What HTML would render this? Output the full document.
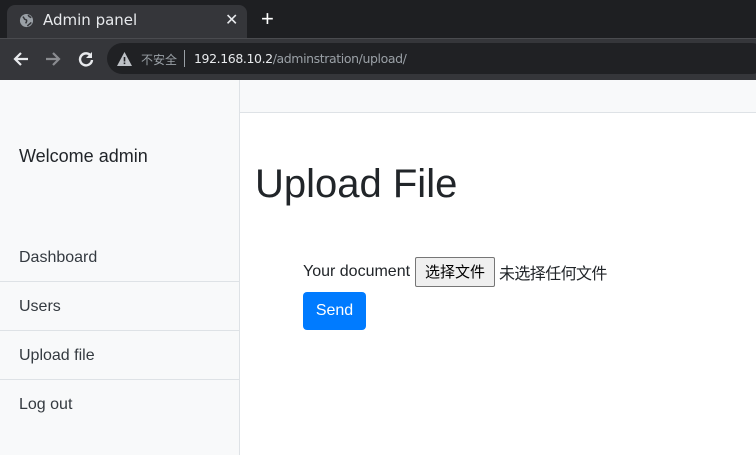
<!DOCTYPE html>
<html><head><meta charset="utf-8"><style>
*{margin:0;padding:0;box-sizing:border-box}
body{width:756px;height:455px;overflow:hidden;background:#fff;font-family:"Liberation Sans","Noto Sans CJK SC",sans-serif;position:relative}
.abs{position:absolute}
#tabbar{left:0;top:0;width:756px;height:38px;background:#1e1f22}
#tab{left:7px;top:5px;width:240px;height:34px;background:#35363a;border-radius:8px 8px 0 0}
#toolbar{left:0;top:38px;width:756px;height:42px;background:#35363a}
#omni{left:107px;top:43px;width:660px;height:31px;background:#202124;border-radius:16px}
.side{left:0;top:80px;width:240px;height:375px;background:#f8f9fa;border-right:1px solid #dee2e6}
.nav{left:0;width:239px;height:49px;border-bottom:1px solid #dee2e6;color:#343a40;font-size:16px;padding:16px 19px 0}
</style></head><body>
<div id="tabbar" class="abs"></div>
<div id="tab" class="abs"></div>
<svg class="abs" style="left:19px;top:13px" width="15" height="15" viewBox="0 0 16 16"><circle cx="8" cy="8" r="7" fill="#9aa0a6"/><path d="M4 4c2 1 1 3 3 3s1 3 0 4M10 2c0 2 2 2 3 3M9 14c1-2 3-2 4-4" stroke="#35363a" stroke-width="1.6" fill="none"/></svg>
<div class="abs" style="left:43px;top:11px;color:#e8eaed;font-size:15px;font-family:'DejaVu Sans',sans-serif">Admin panel</div>
<div class="abs" style="left:225px;top:10px;color:#e8eaed;font-size:16px">✕</div>
<div class="abs" style="left:261px;top:6px;color:#fff;font-size:22px">+</div>
<div id="toolbar" class="abs"></div>
<div class="abs" style="left:0;top:38px;width:756px;height:1px;background:#4a4b4f"></div>
<div id="omni" class="abs"></div>
<svg class="abs" style="left:12px;top:50px" width="18" height="18" viewBox="0 0 18 18"><path d="M16 9H3M9 3L3 9l6 6" stroke="#e8eaed" stroke-width="2.2" fill="none"/></svg>
<svg class="abs" style="left:44px;top:50px" width="18" height="18" viewBox="0 0 18 18"><path d="M2 9h13M9 3l6 6-6 6" stroke="#8a8c90" stroke-width="2.2" fill="none"/></svg>
<svg class="abs" style="left:77px;top:50px" width="18" height="18" viewBox="0 0 18 18"><path d="M14 6A6 6 0 1 0 15 10" stroke="#e8eaed" stroke-width="2.4" fill="none"/><path d="M15 2v6H9z" fill="#e8eaed"/></svg>
<svg class="abs" style="left:117px;top:52px" width="15" height="14" viewBox="0 0 15 14"><path d="M7.5 0L15 14H0z" fill="#bdc1c6"/><rect x="6.7" y="5" width="1.6" height="4.5" fill="#202124"/><rect x="6.7" y="10.5" width="1.6" height="1.6" fill="#202124"/></svg>
<div class="abs" style="left:141px;top:51px;color:#9aa0a6;font-size:12px;font-family:'Noto Sans CJK SC',sans-serif">不安全</div>
<div class="abs" style="left:184px;top:50px;width:1px;height:17px;background:#9aa0a6"></div>
<div class="abs" style="left:194px;top:51px;font-size:12.5px;color:#e8eaed;font-family:'DejaVu Sans',sans-serif;letter-spacing:-0.4px">192.168.10.2<span style="color:#9aa0a6">/adminstration/upload/</span></div>

<div class="abs side"></div>
<div class="abs" style="left:240px;top:80px;width:516px;height:33px;background:#f8f9fa;border-bottom:1px solid #dee2e6"></div>
<div class="abs" style="left:19px;top:146px;font-size:18px;color:#212529">Welcome admin</div>
<div class="abs nav" style="top:233px">Dashboard</div>
<div class="abs nav" style="top:282px">Users</div>
<div class="abs nav" style="top:331px">Upload file</div>
<div class="abs nav" style="top:380px;border:none">Log out</div>

<div class="abs" style="left:255px;top:162px;font-size:40px;color:#212529">Upload File</div>
<div class="abs" style="left:303px;top:263px;font-size:16px;color:#212529">Your document</div>
<div class="abs" style="left:415px;top:257px;width:80px;height:30px;border:1px solid #767676;border-radius:2px;background:#efefef;font-size:15px;text-align:center;line-height:28px;color:#000;font-family:'Noto Sans CJK SC',sans-serif">选择文件</div>
<div class="abs" style="left:499px;top:260px;font-size:16px;color:#212529;font-family:'Noto Sans CJK SC',sans-serif;letter-spacing:-0.6px">未选择任何文件</div>
<div class="abs" style="left:303px;top:292px;width:63px;height:38px;background:#007bff;border-radius:4px;color:#fff;font-size:16px;text-align:center;line-height:37px">Send</div>
</body></html>
